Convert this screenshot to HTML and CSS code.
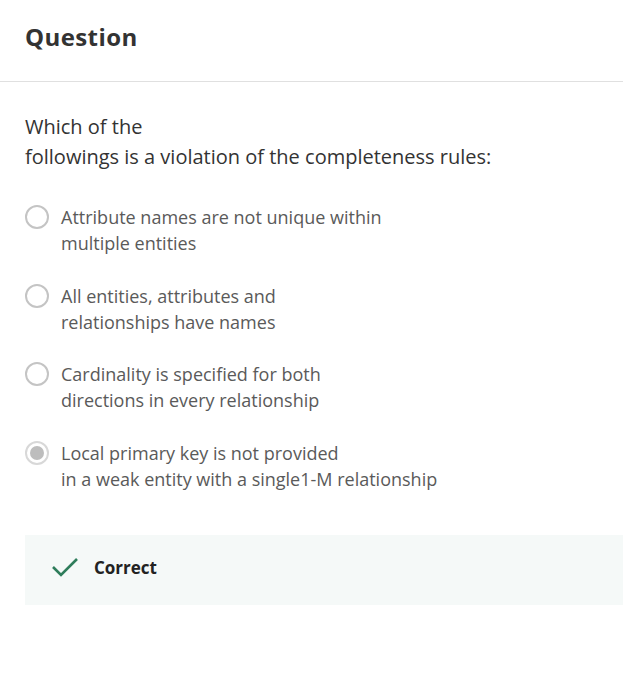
FILE: index.html
```html
<!DOCTYPE html>
<html>
<head>
<meta charset="utf-8">
<link rel="stylesheet" href="styles.css">
</head>
<body>
<header class="header"><h1 class="title">Question</h1></header>
<main class="content">
  <p class="question">Which of the<br>followings is a violation of the completeness rules:</p>
  <div class="options">
    <label class="option"><span class="radio"></span><span class="label">Attribute names are not unique within<br>multiple entities</span></label>
    <label class="option"><span class="radio"></span><span class="label">All entities, attributes and<br>relationships have names</span></label>
    <label class="option"><span class="radio"></span><span class="label">Cardinality is specified for both<br>directions in every relationship</span></label>
    <label class="option"><span class="radio selected"></span><span class="label">Local primary key is not provided<br>in a weak entity with a single1-M relationship</span></label>
  </div>
  <div class="result">
    <svg class="check" width="30" height="24" viewBox="0 0 30 24"><path d="M3 12 L11 20 L27 4" fill="none" stroke="#2e7d5b" stroke-width="2.6"/></svg>
    <span class="result-text">Correct</span>
  </div>
</main>
</body>
</html>
```
FILE: styles.css
```css
* { box-sizing: border-box; }
html, body { margin: 0; padding: 0; background: #fff; }
body { font-family: "Open Sans", sans-serif; color: #333; }
.header { height: 82px; border-bottom: 1px solid #e0e0e0; padding: 20px 25px 0; }
.title { margin: 0; font-size: 24px; font-weight: 700; color: #333; line-height: 34px; letter-spacing: 0.4px; }
.content { padding: 30px 0 0 25px; }
.question { margin: 0; font-size: 20px; font-weight: 400; line-height: 30px; color: #333; }
.options { display: flex; flex-direction: column; gap: 26.6px; margin-top: 32px; }
.option { display: flex; align-items: flex-start; gap: 12px; }
.radio { width: 24px; height: 24px; border-radius: 50%; border: 2px solid #c4c4c4; flex: none; margin-top: 1px; display: flex; align-items: center; justify-content: center; }
.radio.selected { border-color: #d8d8d8; }
.radio.selected::after { content: ""; width: 14px; height: 14px; border-radius: 50%; background: #bdbdbd; }
.label { font-size: 18px; font-weight: 400; line-height: 26px; color: #5a5a5a; }
.result { display: flex; align-items: center; gap: 14px; height: 70px; margin-top: 43.2px; background: #f5f9f8; padding: 0 0 5px 25px; }
.check { flex: none; }
.result-text { font-size: 17px; font-weight: 700; color: #222; }
```
